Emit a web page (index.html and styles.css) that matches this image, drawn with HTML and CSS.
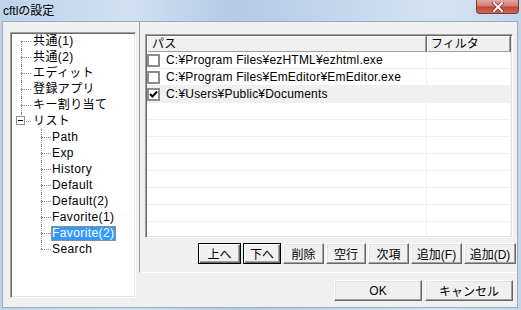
FILE: index.html
```html
<!DOCTYPE html>
<html lang="ja">
  <head>
    <meta charset="UTF-8" />
    <title>cftlの設定</title>
    <link rel="stylesheet" href="styles.css">
  </head>
  <body>
    <div class="window">
      <div class="titlebar">
        <span class="title">cftlの設定</span>
        <span class="close-btn">
          <svg width="14" height="10" viewBox="0 0 14 10">
            <path d="M3 1 L11 9 M11 1 L3 9" stroke="#6b2a24" stroke-width="3.4" stroke-linecap="square" />
            <path d="M3 1 L11 9 M11 1 L3 9" stroke="#fff" stroke-width="2" stroke-linecap="square" />
          </svg>
        </span>
      </div>

      <div class="client">
        <!-- 左側: ツリー -->
        <div class="side">
          <div class="tree">
            <ul class="tree-root">
              <li>共通(1)</li>
              <li>共通(2)</li>
              <li>エディット</li>
              <li>登録アプリ</li>
              <li>キー割り当て</li>
              <li class="open">
                <span class="toggle"></span>リスト
                <ul>
                  <li>Path</li>
                  <li>Exp</li>
                  <li>History</li>
                  <li>Default</li>
                  <li>Default(2)</li>
                  <li>Favorite(1)</li>
                  <li><span class="sel">Favorite(2)</span></li>
                  <li>Search</li>
                </ul>
              </li>
            </ul>
          </div>
        </div>

        <!-- 右側: リストとボタン -->
        <div class="main">
          <div class="pane">
            <div class="list">
              <div class="list-head">
                <div class="col-path">パス</div>
                <div class="col-filter">フィルタ</div>
              </div>
              <div class="list-row">
                <div class="col-path"><span class="check"></span>C:¥Program Files¥ezHTML¥ezhtml.exe</div>
                <div class="col-filter"></div>
              </div>
              <div class="list-row">
                <div class="col-path"><span class="check"></span>C:¥Program Files¥EmEditor¥EmEditor.exe</div>
                <div class="col-filter"></div>
              </div>
              <div class="list-row selected">
                <div class="col-path">
                  <span class="check">
                    <svg width="9" height="9" viewBox="0 0 9 9">
                      <path d="M1 4 L3.5 6.5 L8 1.5" stroke="#000" stroke-width="2" fill="none" />
                    </svg>
                  </span>C:¥Users¥Public¥Documents
                </div>
                <div class="col-filter"></div>
              </div>
              <div class="list-row"><div class="col-path"></div><div class="col-filter"></div></div>
              <div class="list-row"><div class="col-path"></div><div class="col-filter"></div></div>
              <div class="list-row"><div class="col-path"></div><div class="col-filter"></div></div>
              <div class="list-row"><div class="col-path"></div><div class="col-filter"></div></div>
              <div class="list-row"><div class="col-path"></div><div class="col-filter"></div></div>
              <div class="list-row"><div class="col-path"></div><div class="col-filter"></div></div>
              <div class="list-row"><div class="col-path"></div><div class="col-filter"></div></div>
              <div class="list-row"><div class="col-path"></div><div class="col-filter"></div></div>
            </div>

            <div class="toolbar">
              <button class="btn dark w43">上へ</button>
              <button class="btn dark w38">下へ</button>
              <button class="btn w41">削除</button>
              <button class="btn w40">空行</button>
              <button class="btn w41">次項</button>
              <button class="btn w51">追加(F)</button>
              <button class="btn w52">追加(D)</button>
            </div>
          </div>

          <div class="footer">
            <button class="btn w88">OK</button>
            <button class="btn w88">キャンセル</button>
          </div>
        </div>
      </div>
    </div>
  </body>
</html>
```

FILE: styles.css
```css
body {
  margin: 0;
  font-family: "Liberation Sans", "Noto Sans CJK JP", sans-serif;
  font-size: 12px;
  color: #000;
}
.window {
  width: 521px;
  height: 310px;
  display: flex;
  flex-direction: column;
  background: linear-gradient(to right, #bed3ea, #cfe0f2 25%, #b3cbe5 45%, #c3d7ed 65%, #d3e3f3 85%, #c2d6ec);
  overflow: hidden;
}
/* タイトルバー */
.titlebar {
  height: 21px;
  display: flex;
  justify-content: space-between;
  align-items: flex-start;
  padding-left: 3px;
}
.title {
  line-height: 22px;
  font-size: 12px;
}
.close-btn {
  width: 43px;
  height: 14px;
  margin-right: 2px;
  box-sizing: border-box;
  border: 1px solid #7e3a33;
  border-top: none;
  border-radius: 0 0 4px 4px;
  background: linear-gradient(to bottom, #e0aaa2, #d17d70 45%, #c2473a 55%, #d06a58);
  display: flex;
  align-items: center;
  justify-content: center;
}
.client {
  flex: 1;
  display: flex;
  margin: 0 3px 2px 2px;
  border: 1px solid #98acc2;
  background: #f0f0f0;
}
/* ツリー */
.side {
  width: 136px;
  padding: 10px 3px 9px 7px;
  box-sizing: border-box;
}
.tree {
  height: 100%;
  background: #fff;
  border: 1px solid;
  border-color: #a0a0a0 #fff #fff #a0a0a0;
  box-shadow: inset 1px 1px #696969, inset -1px -1px #e3e3e3;
  overflow: hidden;
  box-sizing: border-box;
}
.tree ul {
  list-style: none;
  margin: 0;
  padding: 0;
}
.tree-root {
  margin: -2px 0 0 10px !important;
  padding-top: 2px !important;
}
.tree li {
  position: relative;
  padding-left: 12px;
  line-height: 16px;
  white-space: nowrap;
  letter-spacing: 0.4px;
}
.tree li::before {
  content: '';
  position: absolute;
  left: 0;
  top: 0;
  bottom: 0;
  border-left: 1px dotted #8a8a8a;
}
.tree-root > li:first-child::before {
  top: 8px;
}
.tree li:last-child::before {
  bottom: auto;
  height: 8px;
}
.tree li::after {
  content: '';
  position: absolute;
  left: 0;
  top: 8px;
  width: 10px;
  border-top: 1px dotted #8a8a8a;
}
.tree li ul {
  margin-left: 8px;
}
.tree li li {
  padding-left: 11px;
}
.toggle {
  position: absolute;
  left: -5px;
  top: 3px;
  width: 9px;
  height: 9px;
  box-sizing: border-box;
  border: 1px solid #919191;
  background: #fff;
  z-index: 1;
}
.toggle::after {
  content: '';
  position: absolute;
  left: 1px;
  top: 3px;
  width: 5px;
  height: 1px;
  background: #000;
}
.sel {
  display: inline-block;
  line-height: 15px;
  margin-left: -1px;
  padding: 0 2px 0 1px;
  background: #3399ff;
  color: #fff;
  outline: 1px dotted #e08a20;
  outline-offset: -1px;
}
/* 右側 */
.main {
  flex: 1;
  display: flex;
  flex-direction: column;
}
.pane {
  height: 251px;
  box-sizing: border-box;
  border-left: 1px solid #a0a0a0;
  border-bottom: 1px solid #fff;
  padding: 12px 1px 0 5px;
}
.list {
  height: 204px;
  margin-right: 3px;
  padding: 1px;
  box-sizing: border-box;
  background: #fff;
  border: 1px solid;
  border-color: #a0a0a0 #fff #fff #a0a0a0;
  box-shadow: inset 1px 1px #696969, inset -1px -1px #e3e3e3;
  overflow: hidden;
}
.list-head,
.list-row {
  display: flex;
  width: 364px;
}
.col-path {
  width: 280px;
  flex: none;
  box-sizing: border-box;
  display: flex;
  align-items: center;
  white-space: nowrap;
  letter-spacing: 0.2px;
}
.col-filter {
  width: 84px;
  flex: none;
  box-sizing: border-box;
}
.list-head > div {
  height: 16px;
  line-height: 16px;
  background: #f0f0f0;
  border-right: 1px solid #696969;
  box-shadow: inset 1px 1px #fff, inset -1px -1px #a0a0a0;
}
.list-head .col-path {
  padding-left: 5px;
}
.list-head .col-filter {
  padding-left: 4px;
}
.list-row > div {
  height: 17px;
  border-bottom: 1px solid #f0f0f0;
  border-right: 1px solid #f0f0f0;
}
.list-row.selected > div {
  background: #f0f0f0;
}
.check {
  width: 13px;
  height: 13px;
  flex: none;
  box-sizing: border-box;
  border: 2px solid #8c8c8c;
  background: #fff;
  margin-right: 6px;
  display: flex;
  align-items: center;
  justify-content: center;
}
/* ボタン */
.toolbar {
  display: flex;
  justify-content: flex-end;
  gap: 2px;
  margin-top: 5px;
}
.btn {
  height: 21px;
  padding: 0;
  font-family: "Liberation Sans", "Noto Sans CJK JP", sans-serif;
  font-size: 12px;
  color: #000;
  background: #f0f0f0;
  border: 1px solid;
  border-color: #fff #696969 #696969 #fff;
  box-shadow: inset -1px -1px #a0a0a0, inset 1px 1px #e3e3e3;
}
.btn.dark {
  border-color: #000;
  box-shadow: inset 1px 1px #fff, inset -1px -1px #696969, inset -2px -2px #a0a0a0;
}
.w38 { width: 38px; }
.w40 { width: 40px; }
.w41 { width: 41px; }
.w43 { width: 43px; }
.w51 { width: 51px; }
.w52 { width: 52px; }
.w88 { width: 88px; }
.footer {
  display: flex;
  justify-content: flex-end;
  gap: 3px;
  padding: 7px 4px 0 0;
}
```
